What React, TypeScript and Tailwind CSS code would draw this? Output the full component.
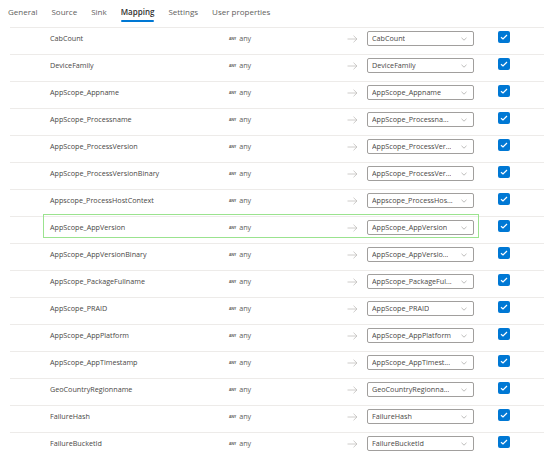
import React from 'react'

const rows = [
  { name: 'CabCount', target: 'CabCount' },
  { name: 'DeviceFamily', target: 'DeviceFamily' },
  { name: 'AppScope_Appname', target: 'AppScope_Appname' },
  { name: 'AppScope_Processname', target: 'AppScope_Processna...' },
  { name: 'AppScope_ProcessVersion', target: 'AppScope_ProcessVer...' },
  { name: 'AppScope_ProcessVersionBinary', target: 'AppScope_ProcessVer...' },
  { name: 'Appscope_ProcessHostContext', target: 'Appscope_ProcessHos...' },
  { name: 'AppScope_AppVersion', target: 'AppScope_AppVersion', active: true },
  { name: 'AppScope_AppVersionBinary', target: 'AppScope_AppVersio...' },
  { name: 'AppScope_PackageFullname', target: 'AppScope_PackageFul...' },
  { name: 'AppScope_PRAID', target: 'AppScope_PRAID' },
  { name: 'AppScope_AppPlatform', target: 'AppScope_AppPlatform' },
  { name: 'AppScope_AppTimestamp', target: 'AppScope_AppTimest...' },
  { name: 'GeoCountryRegionname', target: 'GeoCountryRegionna...' },
  { name: 'FailureHash', target: 'FailureHash' },
  { name: 'FailureBucketId', target: 'FailureBucketId' },
]

const tabs = ['General', 'Source', 'Sink', 'Mapping', 'Settings', 'User properties']

function Arrow() {
  return (
    <svg width="11" height="8" viewBox="0 0 11 8" className="text-[#c1bfbd]">
      <path d="M0.5 4h9.5M6.5 0.7L10 4L6.5 7.3" fill="none" stroke="currentColor" strokeWidth="0.8" />
    </svg>
  )
}

function Chevron() {
  return (
    <svg width="6" height="4" viewBox="0 0 6 4" className="text-[#a19f9d]">
      <path d="M0.5 0.8L3 3.2L5.5 0.8" fill="none" stroke="currentColor" strokeWidth="0.7" />
    </svg>
  )
}

function Check() {
  return (
    <div className="flex h-[12px] w-[12px] items-center justify-center rounded-[2px] bg-[#0078d4]">
      <svg width="8" height="6" viewBox="0 0 8 6">
        <path d="M1 3.2L3 5L7 1" fill="none" stroke="white" strokeWidth="1.2" />
      </svg>
    </div>
  )
}

export default function App() {
  return (
    <div
      className="h-[455px] w-[544px] overflow-hidden bg-white text-[7.2px] text-[#4a4846]"
      style={{ fontFamily: '"Open Sans", "Noto Sans", sans-serif' }}
    >
      <div className="flex h-[22px] items-start gap-[14px] pl-[8px] pt-[6px] text-[8px]">
        {tabs.map((t) =>
          t === 'Mapping' ? (
            <div key={t} className="flex flex-col">
              <span className="font-semibold text-[#323130]">{t}</span>
              <span className="mt-[2px] h-[2px] rounded-full bg-[#0078d4]" />
            </div>
          ) : (
            <span key={t} className="text-[#605e5c]">{t}</span>
          )
        )}
      </div>
      <div className="mt-[5px] ml-[10px]">
        {rows.map((r) => (
          <div key={r.name} className="relative flex h-[27px] items-start border-t border-[#edebe9] pt-[3px]">
            {r.active && (
              <div className="absolute left-[33px] top-[-3px] h-[24px] w-[436px] border border-[#9be38f]" />
            )}
            <div className="flex h-[15px] w-[219px] items-center pl-[40px]">{r.name}</div>
            <div className="flex h-[15px] w-[118px] items-center">
              <span className="mr-[3px] text-[3.5px] font-bold tracking-tight text-[#605e5c]">ANY</span>
              <span className="text-[#605e5c]">any</span>
            </div>
            <div className="flex h-[15px] w-[20px] items-center">
              <Arrow />
            </div>
            <div className="flex h-[15px] w-[107px] items-center justify-between rounded-[2px] border border-[#a19f9d] pl-[4px] pr-[6px]">
              <span className="overflow-hidden whitespace-nowrap">{r.target}</span>
              <Chevron />
            </div>
            <div className="ml-[24px]">
              <Check />
            </div>
          </div>
        ))}
      </div>
    </div>
  )
}
